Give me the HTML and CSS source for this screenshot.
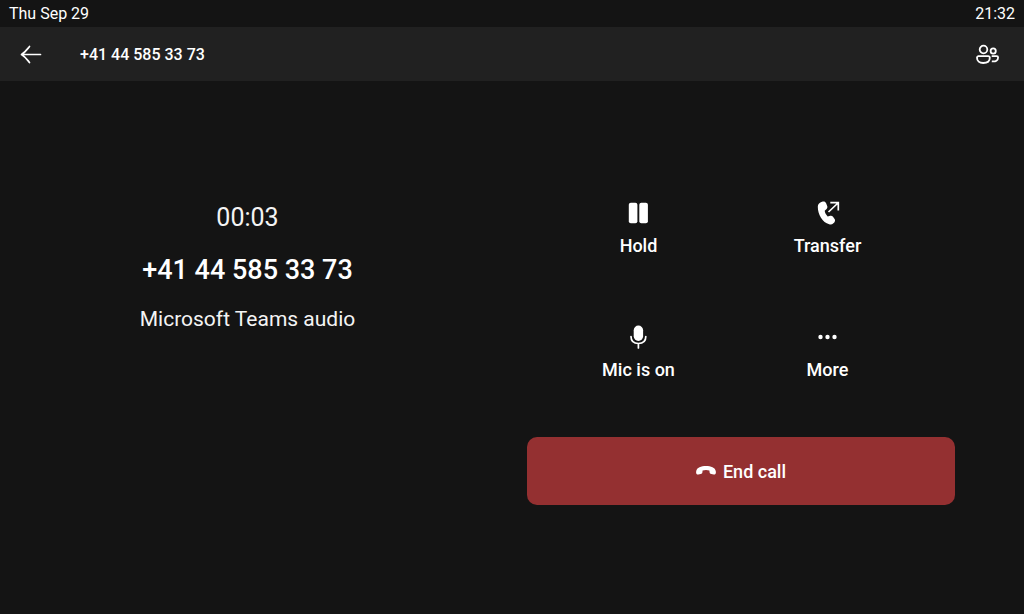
FILE: index.html
```html
<!DOCTYPE html>
<html lang="en">
<head>
<meta charset="utf-8">
<meta name="viewport" content="width=device-width, initial-scale=1">
<title>Call</title>
<link rel="stylesheet" href="styles.css">
</head>
<body>
<div class="status"><span>Thu Sep 29</span><time>21:32</time></div>
<header class="bar">
  <button class="icon-button" type="button" aria-label="Back">
    <svg width="22" height="20" viewBox="0 0 22 20" fill="none" stroke="currentColor" stroke-width="1.7" stroke-linecap="round" stroke-linejoin="round"><path d="M20.500 10.500H1.500M9.500 2.500C7 5.500 5 8.500 1.500 10.500C5 12.500 7 15.500 9.500 18.500"/></svg>
  </button>
  <h1 class="bar-title">+41 44 585 33 73</h1>
  <button class="icon-button" type="button" aria-label="Participants">
    <svg width="24" height="22" viewBox="0 0 24 22" fill="none" stroke="currentColor" stroke-width="1.8" stroke-linejoin="round"><circle cx="7.500" cy="6.500" r="3.800"/><circle cx="17.200" cy="8" r="2.600"/><path d="M2.700 13.200h9.600a1.500 1.500 0 0 1 1.500 1.500c0 3.500-2.800 5.300-6.600 5.300s-6.200-1.800-6.200-5.300a1.500 1.500 0 0 1 1.700-1.500z"/><path d="M15.700 13.200h5a1.400 1.400 0 0 1 1.400 1.400c0 2.800-2.300 4.300-6.300 3.700"/></svg>
  </button>
</header>
<main class="call">
  <section class="info">
    <p class="timer">00:03</p>
    <h2 class="number">+41 44 585 33 73</h2>
    <p class="source">Microsoft Teams audio</p>
  </section>
  <section class="controls">
    <div class="actions">
      <button class="action" type="button">
        <svg width="24" height="24" viewBox="0 0 24 24" fill="currentColor"><rect x="1.800" y="1.700" width="8.600" height="20.600" rx="2"/><rect x="12.300" y="1.700" width="8.600" height="20.600" rx="2"/></svg>
        <span>Hold</span>
      </button>
      <button class="action" type="button">
        <svg width="24" height="24" viewBox="0 0 24 24" fill="currentColor"><path d="M5.300 1.100l1.500-.5c1.300-.4 2.700.2 3.200 1.500l1.200 2.900c.4 1 .2 2.200-.6 3L8.700 9.800c.2 2 1.300 4 3 5.700l2.500-.7c1.100-.3 2.200.1 2.800 1l1.600 2.300c.7 1 .6 2.400-.3 3.300l-.9.9c-1.100 1.100-2.700 1.500-4.200 1C6.500 21.300 1.800 13.700 1.800 5.700c0-2.100 1.600-4 3.500-4.600z"/><path d="M12.500 11L22 2M14.300 1.600h8v8" fill="none" stroke="currentColor" stroke-width="1.700"/></svg>
        <span>Transfer</span>
      </button>
      <button class="action" type="button">
        <svg width="24" height="24" viewBox="0 0 24 24" fill="currentColor"><rect x="6.700" y="0.500" width="9.400" height="15.500" rx="4.700"/><path d="M4 11.500c0 4.300 2.800 7 7.400 7s7.400-2.700 7.400-7M11.400 18.500v4.500" fill="none" stroke="currentColor" stroke-width="1.700" stroke-linecap="round"/></svg>
        <span>Mic is on</span>
      </button>
      <button class="action" type="button">
        <svg width="24" height="24" viewBox="0 0 24 24" fill="currentColor"><circle cx="4.500" cy="12" r="2.200"/><circle cx="11.500" cy="12" r="2.200"/><circle cx="18.500" cy="12" r="2.200"/></svg>
        <span>More</span>
      </button>
    </div>
    <button class="end" type="button">
      <svg width="20" height="12" viewBox="0 0 20 12" fill="currentColor"><path d="M10 1C14.800 1 19.300 2.600 19.800 6.200L19.900 7.500C20 8.900 18.900 9.700 17.700 9.500L15.300 9C14.300 8.800 13.700 8.100 13.600 7.200L13.400 5.400C11.300 4.700 8.700 4.700 6.600 5.400L6.400 7.200C6.300 8.100 5.700 8.800 4.700 9L2.300 9.500C1.100 9.700 0 8.900.1 7.500L.2 6.200C.7 2.600 5.200 1 10 1z"/></svg>
      <span>End call</span>
    </button>
  </section>
</main>
</body>
</html>
```
FILE: styles.css
```css
* { box-sizing: border-box; }

body {
  margin: 0;
  min-height: 100vh;
  background: #141414;
  color: #fff;
  font-family: Roboto, "Liberation Sans", sans-serif;
}

h1, h2, p { margin: 0; }

button {
  border: 0;
  padding: 0;
  background: none;
  color: inherit;
  font: inherit;
  cursor: pointer;
}

svg { display: block; }

.status {
  display: flex;
  justify-content: space-between;
  padding: 0 9px;
  font-size: 16px;
  line-height: 27px;
}

.bar {
  display: flex;
  align-items: center;
  height: 54px;
  padding: 0 16px;
  background: #212121;
}

.icon-button {
  display: flex;
  align-items: center;
  justify-content: center;
  width: 40px;
  height: 40px;
}

.icon-button:first-child { width: 30px; }

.bar-title {
  flex: 1;
  padding-left: 34px;
  font-size: 16px;
  font-weight: 500;
}

.call {
  display: grid;
  grid-template-columns: 495fr 529fr;
}

.info {
  display: flex;
  flex-direction: column;
  align-items: center;
  padding-top: 121px;
  color: #f4f4f4;
}

.timer {
  font-size: 25px;
  line-height: 32px;
}

.number {
  margin-top: 18px;
  color: #fff;
  font-size: 27px;
  font-weight: 500;
  line-height: 36px;
}

.source {
  margin-top: 15px;
  font-size: 21px;
  line-height: 32px;
}

.controls { padding: 104px 69px 32px 32px; }

.actions {
  display: grid;
  grid-template-columns: 1fr 1fr;
  row-gap: 32px;
  padding: 0 33px 0 17px;
}

.action {
  display: flex;
  flex-direction: column;
  align-items: center;
  gap: 8px;
  padding: 16px 0 18px;
  font-size: 18px;
  font-weight: 500;
  line-height: 26px;
}

.end {
  display: flex;
  align-items: center;
  justify-content: center;
  gap: 7px;
  width: 100%;
  height: 68px;
  margin-top: 36px;
  border-radius: 10px;
  background: #943031;
  font-size: 18px;
  font-weight: 500;
}
```
